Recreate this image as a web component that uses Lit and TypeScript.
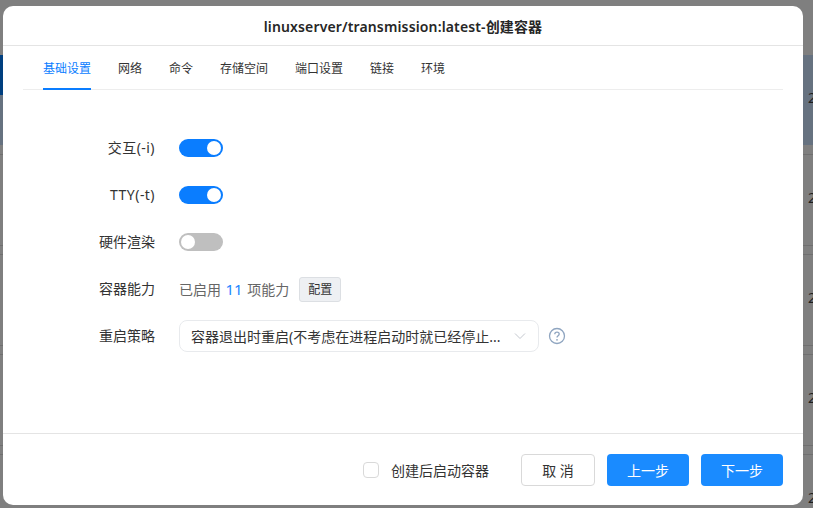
import { LitElement, html, css } from "lit";
import { customElement } from "lit/decorators.js";

const tabs = ["基础设置", "网络", "命令", "存储空间", "端口设置", "链接", "环境"];

@customElement("app-root")
export class AppRoot extends LitElement {
  static styles = css`
    :host {
      display: block;
      position: relative;
      width: 813px;
      height: 508px;
      overflow: hidden;
      background: #7f7f7f;
      font-family: "Noto Sans", "Noto Sans CJK SC", sans-serif;
      font-size: 14px;
      color: #333;
    }
    .backdrop { height: 508px; display: flex; flex-direction: column; align-items: stretch; }
    .top-space { height: 55px; flex: none; }
    .row {
      height: 90px; flex: none; display: flex; justify-content: flex-end; align-items: center;
      color: #1d1d1d; font-size: 14px; overflow: hidden;
    }
    .row span { width: 5px; overflow: hidden; margin-bottom: 6px; }
    .row.sel { background: #667280; }
    .sep { height: 10px; flex: none; border-top: 1px solid #6f6f6f; border-bottom: 1px solid #6f6f6f; box-sizing: border-box; }
    .sep.first { border-top: none; }
    .nav-mark { position: absolute; left: 0; top: 55px; width: 3px; height: 40px; background: #003f7f; }
    .modal {
      position: absolute; left: 3px; top: 6px; width: 800px; height: 499px;
      background: #fff; border-radius: 10px; display: flex; flex-direction: column; overflow: hidden;
    }
    .head {
      height: 39px; flex: none; border-bottom: 1px solid #e4e4e4;
      display: flex; align-items: center; justify-content: center;
      font-size: 14px; font-weight: 600; color: #262626; letter-spacing: 0.14px;
    }
    .tabs {
      margin: 0 20px; height: 43px; flex: none; border-bottom: 1px solid #ededed;
      display: flex; gap: 27px; padding-left: 20px;
    }
    .tab { position: relative; font-size: 12px; line-height: 46px; height: 43px; color: #333; white-space: nowrap; }
    .tab.on { color: #0a7dff; }
    .tab.on::after {
      content: ""; position: absolute; left: 0; right: 0; bottom: -1px; height: 2px; background: #0a7dff;
    }
    .form { flex: 1; display: flex; flex-direction: column; padding-top: 42px; }
    .line { height: 32px; display: flex; align-items: center; margin-bottom: 15px; }
    .label { width: 152px; text-align: right; margin-right: 24px; font-size: 14px; color: #333; flex: none; position: relative; top: -1px; }
    .label.wide { letter-spacing: 0.45px; }
    .switch { width: 44px; height: 18px; border-radius: 9px; background: #0a7dff; position: relative; flex: none; }
    .switch::after {
      content: ""; position: absolute; top: 2px; right: 2px; width: 14px; height: 14px; border-radius: 50%; background: #fff;
    }
    .switch.off { background: #bfbfbf; }
    .switch.off::after { right: auto; left: 2px; }
    .cap { display: flex; align-items: center; color: #666; font-size: 14px; }
    .cap b { font-weight: 400; color: #1a85ff; margin: 0 4.5px; font-size: 15px; }
    .cfg {
      margin-left: 10px; width: 42px; height: 25px; box-sizing: border-box;
      border: 1px solid #dcdfe3; border-radius: 3px; background: #eef0f3;
      display: flex; align-items: center; justify-content: center; font-size: 12px; color: #333;
    }
    .select {
      width: 360px; height: 32px; box-sizing: border-box; border: 1px solid #e8eaed; border-radius: 8px;
      display: flex; align-items: center; padding: 0 12px 0 11px; color: #333; font-size: 14px;
    }
    .select .v { flex: 1; white-space: nowrap; overflow: hidden; }
    .help { margin-left: 9px; display: block; }
    .foot {
      height: 71px; flex: none; border-top: 1px solid #e4e4e4;
      display: flex; align-items: center; justify-content: flex-end; padding-right: 20px;
    }
    .check { width: 16px; height: 16px; box-sizing: border-box; border: 1px solid #d9d9d9; border-radius: 4px; margin-right: 12px; }
    .chk-label { font-size: 14px; color: #333; margin-right: 32px; }
    .btn {
      width: 82px; height: 32px; box-sizing: border-box; border-radius: 4px; background: #1a8bff; color: #fff;
      display: flex; align-items: center; justify-content: center; font-size: 14px; margin-left: 12px;
    }
    .btn.ghost { width: 74px; background: #fff; border: 1px solid #d9d9d9; color: #333; margin-left: 0; }
  `;

  private row(cls = "") {
    return html`<div class="row ${cls}"><span>2</span></div>`;
  }

  render() {
    return html`
      <div class="backdrop">
        <div class="top-space"></div>
        ${this.row("sel")}<div class="sep first"></div>
        ${this.row()}<div class="sep"></div>
        ${this.row()}<div class="sep"></div>
        ${this.row()}<div class="sep"></div>
        ${this.row()}
      </div>
      <div class="nav-mark"></div>
      <div class="modal">
        <div class="head">linuxserver/transmission:latest-创建容器</div>
        <div class="tabs">
          ${tabs.map((t, i) => html`<div class="tab ${i === 0 ? "on" : ""}">${t}</div>`)}
        </div>
        <div class="form">
          <div class="line"><div class="label wide">交互(-i)</div><div class="switch"></div></div>
          <div class="line"><div class="label wide">TTY(-t)</div><div class="switch"></div></div>
          <div class="line"><div class="label">硬件渲染</div><div class="switch off"></div></div>
          <div class="line">
            <div class="label">容器能力</div>
            <div class="cap">已启用<b>11</b>项能力</div>
            <div class="cfg">配置</div>
          </div>
          <div class="line">
            <div class="label">重启策略</div>
            <div class="select">
              <span class="v">容器退出时重启(不考虑在进程启动时就已经停止...</span>
              <svg width="12" height="12" viewBox="0 0 12 12" fill="none" stroke="#c4c8cf" stroke-width="1"><path d="M1 3.5 6 8.5 11 3.5"/></svg>
            </div>
            <svg class="help" width="18" height="18" viewBox="0 0 18 18" fill="none">
              <circle cx="9" cy="9" r="7.5" stroke="#8fa5c0" stroke-width="1.3"/>
              <path d="M6.8 7.2C6.8 5.9 7.8 5.1 9 5.1s2.2.8 2.2 2c0 1.7-2.2 1.7-2.2 3.5" stroke="#8fa5c0" stroke-width="1.3"/>
              <circle cx="9" cy="12.8" r=".9" fill="#8fa5c0"/>
            </svg>
          </div>
        </div>
        <div class="foot">
          <div class="check"></div>
          <div class="chk-label">创建后启动容器</div>
          <div class="btn ghost">取 消</div>
          <div class="btn">上一步</div>
          <div class="btn">下一步</div>
        </div>
      </div>
    `;
  }
}
